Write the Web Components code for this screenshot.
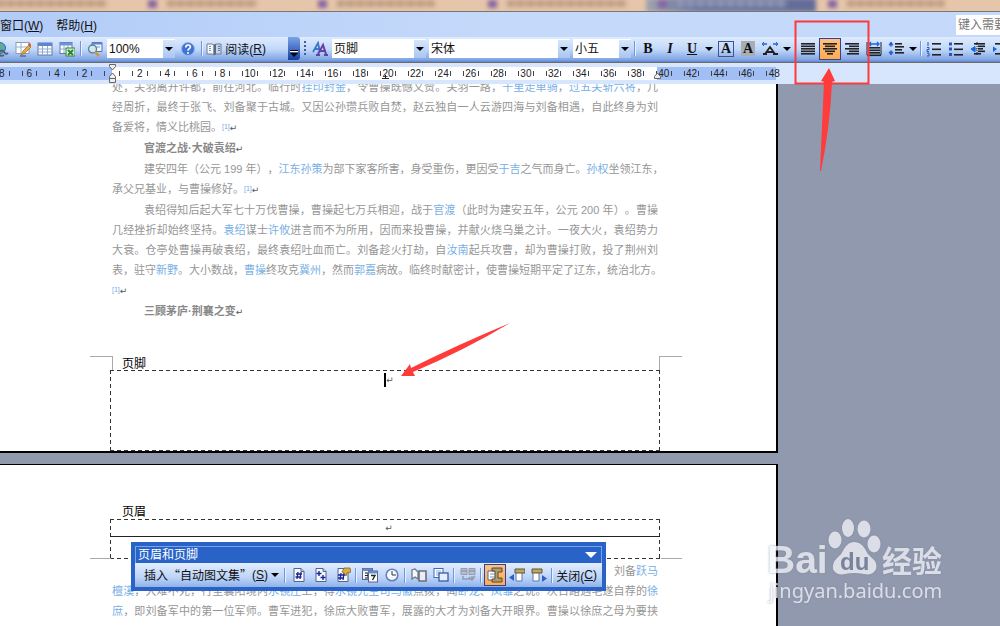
<!DOCTYPE html>
<html lang="zh-CN">
<head>
<meta charset="utf-8">
<title>Word</title>
<style>
	body {
		margin: 0;
		height: 100vh;
		overflow: hidden;
		font-family: "Liberation Sans", "Noto Sans CJK SC", sans-serif;
		font-size: 12px;
	}
</style>
</head>
<body>
<word-app></word-app>
<script>
// icon drawings, all on a 16x16 grid
const lines = (rows, color = '#222') => rows.map(([x, y, w]) => `<rect x="${x}" y="${y}" width="${w}" height="1.6" fill="${color}"/>`).join('');
const pageShape = '<path d="M3 1.500h7l3 3v10H3z" fill="#f4f8ff" stroke="#52658c"/><path d="M10 1.500v3h3" fill="#c5d4ee" stroke="#52658c"/>';
const ICONS = {
	globe: '<circle cx="7" cy="7" r="5.500" fill="#5aa2d8" stroke="#2c6f9b"/><path d="M3 5q4-4 6 0t-4 4z" fill="#62b36a"/><path d="M6 11q3-3 5 0t4 1M5 13q3 3 6 1" fill="none" stroke="#50606e" stroke-width="2"/>',
	draw: '<rect x="1" y="1.500" width="13" height="11" fill="#fff" stroke="#8c9bb8"/><path d="M1 6h13M6 2v10" stroke="#9aacc8"/><path d="M6 14l2-4 6-6 2 2-6 6z" fill="#f0a93c" stroke="#99642a" stroke-width=".7"/><path d="M13 3l2-1 1 2-1 2z" fill="#cf4a36"/><path d="M5 15h6" stroke="#445"/>',
	table: '<rect x="1" y="2" width="14" height="12" fill="#fff" stroke="#6079a8"/><rect x="1" y="2" width="14" height="3" fill="#5c86d0"/><path d="M1 8h14M1 11h14M5.500 5v9M10.500 5v9" stroke="#91a8cf"/>',
	excel: '<rect x="1" y="1.500" width="12" height="11" fill="#fff" stroke="#6079a8"/><rect x="1" y="1.500" width="12" height="3" fill="#6d94d4"/><path d="M1 8h12M5 4v8M9 4v8" stroke="#91a8cf"/><rect x="7" y="7" width="9" height="8" fill="#d7efcf" stroke="#31843b"/><path d="M9 9l5 5M14 9l-5 5" stroke="#27833a" stroke-width="1.800"/>',
	find: '<path d="M5 1.500h10v9H5z" fill="#eef5ff" stroke="#5372b1"/><path d="M5 1.500h10v2H5z" fill="#5c86d0"/><path d="M8 6h5" stroke="#7d9ad1"/><circle cx="5.500" cy="8" r="4" fill="#cbe9f5" stroke="#637c8c" stroke-width="1.300"/><path d="M8 11l4 4" stroke="#d4973c" stroke-width="2.500"/>',
	help: '<circle cx="8" cy="8" r="6.500" fill="#3f73d6" stroke="#9ab8eb"/><path d="M5.800 6.500q0-2.500 2.300-2.500t2.300 2q0 1-1.200 1.700T8 9.700" fill="none" stroke="#fff" stroke-width="1.600"/><circle cx="8" cy="12" r="1" fill="#fff"/>',
	book: '<path d="M1 3h5l2 1v10l-2-1H1z" fill="#f5f8fd" stroke="#6f7d94"/><path d="M15 3h-5L8 4v10l2-1h5z" fill="#c9d3e4" stroke="#6f7d94"/><path d="M8 4l2-1v10l-2 1z" fill="#596a86"/><path d="M3 5.500h2M3 7.500h2M3 9.500h2" stroke="#8090aa"/><path d="M12 5.500h2M12 7.500h2M12 9.500h2" stroke="#6c7c96"/>',
	styles: '<path d="M1 11L6 2l2 9M3 8h5" fill="none" stroke="#3e76cb" stroke-width="1.800"/><path d="M6 13L11 4l3 9M8 10h6M4 14h4M12 14h4" fill="none" stroke="#6540a4" stroke-width="2"/>',
	boxed: '<rect x="0.500" y="0.500" width="15" height="15" fill="none" stroke="#3c5590" stroke-width="1"/>',
	scale: '<path d="M3 13L8 6l5 7M5 11h6M1 13h4M11 13h5" fill="none" stroke="#222" stroke-width="1.800"/><path d="M0 3h5M11 3h5" stroke="#1c64db" stroke-width="1.500"/><path d="M2 1L0 3l2 2M14 1l2 2-2 2" fill="none" stroke="#1c64db"/>',
	justify: lines([[1, 2, 14], [1, 4.500, 14], [1, 7, 14], [1, 9.500, 14], [1, 12, 14]]),
	center: lines([[1, 2, 14], [3, 4.500, 10], [1, 7, 14], [3, 9.500, 10], [5, 12, 6]]),
	right: lines([[1, 2, 14], [5, 4.500, 10], [1, 7, 14], [5, 9.500, 10], [3, 12, 12]]),
	spread: '<path d="M1 1v13M15 1v13" stroke="#222"/>' + lines([[2, 6, 12], [2, 8.500, 12], [2, 11, 12], [1, 13.500, 14]]) + '<path d="M3 3h10M5 1L3 3l2 2M11 1l2 2-2 2" fill="none" stroke="#1c64db" stroke-width="1.300"/>',
	spacing: '<path d="M3 2v4M3 9v4M1 4l2-3 2 3zM1 11l2 3 2-3z" stroke="#1c64db" fill="#1c64db"/>' + lines([[7, 2, 7], [7, 5, 9], [7, 8, 7], [7, 11, 9]]),
	numbers: '<path d="M2 1v4M1 6.500h2v2H1v2h2M1 12h2v3H1" fill="none" stroke="#2856b5"/>' + lines([[6, 2, 9], [6, 7.500, 9], [6, 13, 9]]),
	bullets: '<path d="M1 1.500h3v3H1zM1 6.500h3v3H1zM1 12h3v3H1z" fill="#2856b5"/>' + lines([[6, 2, 9], [6, 7.500, 9], [6, 13, 9]]),
	outdent: '<path d="M5 5.500L1 8l4 3zM5 8h2" fill="#1c64db" stroke="#1c64db"/>' + lines([[4, 2, 11], [8, 4.500, 7], [8, 7, 5], [8, 9.500, 7], [4, 12, 7]]) + '<path d="M7 1v14" stroke="#222" stroke-dasharray="1 1"/>',
	indent: '<path d="M1 5.500L5 8l-4 3z" fill="#1c64db"/>' + lines([[3, 2, 12], [8, 4.500, 7], [8, 7, 7], [8, 9.500, 7], [3, 12, 12]]),
	pagenum: pageShape + '<path d="M7 5l-1 7M10 5l-1 7M5 7h6M4.500 10h6" stroke="#1d2399" stroke-width="1.300"/>',
	pages: pageShape + '<path d="M6 4v5M3.500 6.500h5M10 8v5M7.500 10.500h5" stroke="#1d2399" stroke-width="1.400"/>',
	format: pageShape + '<path d="M6 6l-1 7M9 6l-1 7M3 8h7M3 11h6" stroke="#1d2399" stroke-width="1.300"/><path d="M7 5l2-4h6l1 4-4 1-1 3-2-3z" fill="#d9ad3b" stroke="#765d22" stroke-width=".7"/>',
	date: '<rect x="0.500" y="1.500" width="10" height="11" fill="#f1f6ff" stroke="#52658c"/><rect x="0.500" y="1.500" width="10" height="2.500" fill="#688bcb"/><path d="M3 6h3v5H3M3 8.500h3" fill="none" stroke="#222"/><rect x="6.500" y="4" width="9" height="11" fill="#fff" stroke="#52658c"/><rect x="6.500" y="4" width="9" height="2.500" fill="#688bcb"/><path d="M9 8.500h4L10.500 13" fill="none" stroke="#222" stroke-width="1.400"/>',
	clock: '<circle cx="8" cy="8" r="5.800" fill="#f6faff" stroke="#6580b8" stroke-width="1.600"/><path d="M8 4v4h4" fill="none" stroke="#334"/>',
	setup: '<path d="M1 12V3l3-1 3 3v7l-3-2z" fill="#f6f8fb" stroke="#6f7885" stroke-width="1.300"/><path d="M8 4h7v10H8z" fill="#e9edf4" stroke="#6b6f78" stroke-width="1.600"/>',
	showdoc: '<rect x="1" y="1.500" width="9" height="9" fill="#fff" stroke="#3e67b6"/><path d="M3 4h5M3 6h5M3 8h5" stroke="#8ea9db"/><rect x="6" y="6" width="9" height="8" fill="#e4efff" stroke="#315cac" stroke-width="1.300"/>',
	same: '<path d="M1 1.500h6v6H1zM9 1.500h6v6H9z" fill="#b9bfcd" stroke="#929baf"/><path d="M1 4h6M9 4h6M3 9v3h9V9M9 10l3 3 3-4" fill="none" stroke="#929baf" stroke-width="1.500"/>',
	toggle: '<path d="M1 4h9v9H1z" fill="#fff" stroke="#4a68a0"/><path d="M3 7h5M3 10h5" stroke="#7694c9"/><path d="M5 1h10v4h-4v6h4v4H5v-3h3V4H5z" fill="#b39b62" stroke="#554c38"/>',
	prev: '<path d="M7 3v11h6V5" fill="#fff" stroke="#6078a8"/><path d="M6 2h10v4H6z" fill="#bca566" stroke="#5f5438"/><path d="M5 7v7l-5-3.500z" fill="#315fca"/>',
	next: '<path d="M2 3v11h6V5" fill="#fff" stroke="#6078a8"/><path d="M1 2h10v4H1z" fill="#bca566" stroke="#5f5438"/><path d="M11 8v7l5-3.500z" fill="#315fca"/>'
};

// small helper, attaches an open root and fills it
function render(host, html) {
	host.attachShadow({mode: 'open'}).innerHTML = html;
}

// one button of a toolbar: icon attribute or slotted text
class ToolButton extends HTMLElement {
	connectedCallback() {
		const icon = this.getAttribute('icon');
		const svg = icon ? `<svg viewBox="0 0 16 16" aria-hidden="true">${ICONS[icon]}</svg>` : '';
		render(this, `
			<style>
				:host { display: block; flex: none; width: 22px; height: 22px; }
				:host([wide]) { width: auto; }
				:host([narrow]) { width: 12px; }
				button {
					display: flex;
					align-items: center;
					justify-content: center;
					box-sizing: border-box;
					position: relative;
					width: 100%;
					height: 100%;
					padding: 0;
					border: 1px solid transparent;
					background: none;
					color: #111;
					font: inherit;
					white-space: nowrap;
				}
				:host([pressed]) button { border-color: #35408f; background: linear-gradient(#ffc184, #ffab4e); }
				svg { width: 16px; height: 16px; flex: none; }
				.caret { border: 4px solid transparent; border-top-color: #000; border-bottom: 0; }
			</style>
			<button type="button" aria-label="${this.getAttribute('label') || ''}">
				${svg}${this.hasAttribute('narrow') ? '<span class="caret"></span>' : ''}
				<slot></slot>
			</button>
		`);
		if (!this.hasAttribute('label')) this.shadowRoot.querySelector('button').removeAttribute('aria-label');
	}
}

// drop-down with a single visible value
class ComboBox extends HTMLElement {
	connectedCallback() {
		render(this, `
			<style>
				:host { display: block; position: relative; flex: none; height: 19px; background: #fff; }
				select {
					appearance: none;
					display: block;
					width: 100%;
					height: 100%;
					padding: 0 14px 0 2px;
					border: 0;
					background: none;
					color: #111;
					font: inherit;
				}
				span {
					position: absolute;
					inset: 1px 0 0 auto;
					width: 12px;
					display: grid;
					place-items: center;
					background: linear-gradient(#d6e5fc, #a9c6f3);
					pointer-events: none;
				}
				span::after { content: ""; border: 4px solid transparent; border-top-color: #000; border-bottom: 0; }
			</style>
			<select aria-label="${this.getAttribute('label')}"><option>${this.getAttribute('value')}</option></select>
			<span></span>
		`);
	}
}

// vertical divider between tool groups
class ToolSeparator extends HTMLElement {
	connectedCallback() {
		render(this, `
			<style>
				:host { display: block; flex: none; width: 1px; height: 15px; margin: 0 2px; background: #7397d3; border-right: 1px solid #e9f1ff; box-sizing: content-box; }
			</style>
		`);
	}
}

// out of focus browser tabs behind the window
class TabStrip extends HTMLElement {
	connectedCallback() {
		const widths = [110, 90, 98, 120, 110, 98];
		render(this, `
			<style>
				:host { display: block; height: 11px; background: #e6c6aa; overflow: hidden; border-bottom: 1px solid #777; }
				.row { display: flex; height: 14px; margin: -2px 0 0 -34px; filter: blur(2px); }
				.tab { display: flex; align-items: start; flex: none; width: 158px; gap: 10px; padding: 2px 0 0 12px; height: 12px; }
				.tab.on { background: linear-gradient(90deg, #a0a3ad, #64719f 30%, #626c99); }
				i { width: 9px; height: 8px; background: #8565a2; }
				b { height: 7px; background: repeating-linear-gradient(90deg, #bd9d84 0 7px, #cfae93 7px 10px); }
				.on b { background: repeating-linear-gradient(90deg, #8f97b4 0 7px, #7781a4 7px 10px); }
			</style>
			<div class="row">${widths.map((w, i) => `<div class="tab${i === 4 ? ' on' : ''}"><i></i><b style="width:${w}px"></b></div>`).join('')}</div>
		`);
	}
}

// menu row with the help box on its right
class MenuBar extends HTMLElement {
	connectedCallback() {
		render(this, `
			<style>
				:host { display: flex; align-items: center; height: 25px; overflow: hidden; background: linear-gradient(90deg, #b1ccf8, #c5d9fa 50%); }
				button { flex: none; padding: 0; margin-right: 13px; border: 0; background: none; font: inherit; color: #111; }
				input { flex: none; box-sizing: border-box; width: 140px; height: 20px; margin: 0 -96px 0 auto; padding: 0 2px; border: 0; background: #fff; font: inherit; }
				input::placeholder { color: #777; }
			</style>
			<button type="button">窗口(<u>W</u>)</button>
			<button type="button">帮助(<u>H</u>)</button>
			<input type="text" placeholder="键入需要帮助的问题" aria-label="帮助">
		`);
	}
}

// standard and formatting toolbars, side by side
class MainToolbar extends HTMLElement {
	connectedCallback() {
		render(this, `
			<style>
				:host { display: flex; height: 25px; overflow: hidden; background: #c5d9fa; border-bottom: 1px solid #6c6c6c; }
				.bar { display: flex; align-items: center; box-sizing: border-box; padding-bottom: 2px; background: linear-gradient(#dfebfe, #c0d7f9 50%, #7fa4e3 92%, #5b82cc); }
				.standard { flex: none; width: 300px; }
				.standard tool-button:first-child { margin-left: -10px; }
				.format { flex: 1; min-width: 0; }
				.format tool-separator { margin: 0 1px; }
				.more {
					display: flex;
					flex-direction: column;
					align-items: center;
					justify-content: end;
					gap: 2px;
					width: 12px;
					height: 23px;
					margin-left: auto;
					background: linear-gradient(#7ba2e8, #163f9f);
					border-radius: 0 3px 3px 0;
					border: 0;
					padding: 0 0 3px;
				}
				.more::before { content: ""; width: 8px; height: 1px; background: #000; box-shadow: 0 1px #fff; }
				.more::after { content: ""; border: 4px solid transparent; border-top-color: #000; border-bottom: 0; }
				.grip { flex: none; width: 2px; height: 15px; margin: 0 3px 0 4px; background: repeating-linear-gradient(#3b5c9e 0 2px, transparent 2px 4px); }
				.zoom { width: 68px; margin: 0 2px 0 1px; }
				.style { width: 94px; margin: 0 3px 0 1px; }
				.font { width: 141px; margin-right: 3px; }
				.size { width: 58px; margin-right: 2px; }
				.letter { font: bold 14px "Liberation Serif", serif; }
				i.letter { font-style: italic; }
				.over { position: absolute; }
				.shade { padding: 0 2px; background: #a9adb5; line-height: 15px; }
				.space { flex: none; width: 4px; }
			</style>
			<div class="bar standard">
				<tool-button icon="globe" label="超链接"></tool-button>
				<tool-button icon="draw" label="表格和边框"></tool-button>
				<tool-button icon="table" label="插入表格"></tool-button>
				<tool-button icon="excel" label="插入工作表"></tool-button>
				<tool-separator></tool-separator>
				<tool-button icon="find" label="文档结构图"></tool-button>
				<combo-box class="zoom" label="显示比例" value="100%"></combo-box>
				<tool-button icon="help" label="帮助"></tool-button>
				<tool-separator></tool-separator>
				<tool-button wide icon="book">&nbsp;阅读(<u>R</u>)</tool-button>
				<button type="button" class="more" aria-label="工具栏选项"></button>
			</div>
			<div class="bar format">
				<span class="grip"></span>
				<tool-button icon="styles" label="格式窗格"></tool-button>
				<combo-box class="style" label="样式" value="页脚"></combo-box>
				<combo-box class="font" label="字体" value="宋体"></combo-box>
				<combo-box class="size" label="字号" value="小五"></combo-box>
				<tool-separator></tool-separator>
				<tool-button><b class="letter">B</b></tool-button>
				<tool-button><i class="letter">I</i></tool-button>
				<tool-button><u class="letter">U</u></tool-button>
				<tool-button narrow label="下划线"></tool-button>
				<tool-button icon="boxed"><b class="letter over">A</b></tool-button>
				<tool-button><b class="letter shade">A</b></tool-button>
				<tool-button icon="scale" label="字符缩放"></tool-button>
				<tool-button narrow label="缩放比例"></tool-button>
				<span class="space"></span>
				<tool-button icon="justify" label="两端对齐"></tool-button>
				<tool-button pressed icon="center" label="居中"></tool-button>
				<tool-button icon="right" label="右对齐"></tool-button>
				<tool-button icon="spread" label="分散对齐"></tool-button>
				<tool-button icon="spacing" label="行距"></tool-button>
				<tool-button narrow label="行距选项"></tool-button>
				<tool-separator></tool-separator>
				<tool-button icon="numbers" label="编号"></tool-button>
				<tool-button icon="bullets" label="项目符号"></tool-button>
				<tool-button icon="outdent" label="减少缩进量"></tool-button>
				<tool-button icon="indent" label="增加缩进量"></tool-button>
			</div>
		`);
	}
}

// horizontal ruler, counted in characters from the left margin
class DocRuler extends HTMLElement {
	connectedCallback() {
		let cells = '';
		for (let n = -8; n <= 48; n += 2) {
			cells += `<span>${n ? Math.abs(n) : ''}</span>`;
		}
		render(this, `
			<style>
				:host { display: block; overflow: hidden; padding: 4px 0; background: #d8e6fd; }
				.track {
					position: relative;
					width: var(--paper);
					height: 13px;
					background: linear-gradient(90deg, #a2bff5 112px, #fff 112px 657px, #a2bff5 657px);
				}
				.cells { display: grid; grid-template-columns: repeat(29, 1fr); width: 800px; margin-left: -12px; }
				.cells span { display: flex; align-items: center; justify-content: space-between; padding: 0 6px; height: 13px; font-size: 10px; color: #222; }
				.cells span::before, .cells span::after { content: ""; width: 1px; height: 5px; background: #444; }
				.cells span:last-child::after { background: none; }
				svg { position: absolute; top: -4px; }
				.left { left: 107px; }
				.tab { left: 380px; }
				.right { left: 652px; }
			</style>
			<div class="track">
				<div class="cells">${cells}</div>
				<svg class="left" width="11" height="21"><path d="M2.500 1.500h6v2L5.500 7l-3-3.500zM5.500 10l3 3.500v2h-6v-2zM2.500 15.500h6v4h-6z" fill="#eee" stroke="#666"/></svg>
				<svg class="tab" width="11" height="21"><path d="M2 15.500h7M5.500 12v4" stroke="#222" fill="none"/></svg>
				<svg class="right" width="11" height="21"><path d="M5.500 10l3 3.500v2h-6v-2z" fill="#eee" stroke="#666"/></svg>
			</div>
		`);
	}
}

// body text of a page
class DocText extends HTMLElement {
	connectedCallback() {
		render(this, `
			<style>
				:host { display: block; width: 546px; margin-left: 112px; color: #969696; font-size: 11px; line-height: 20px; text-spacing-trim: space-all; }
				::slotted(p) { margin: 0 0 1px; white-space: nowrap; }
				::slotted(p.full) { margin: 0; text-align: justify; text-align-last: justify; }
				::slotted(p.first) { text-indent: 32px; }
				::slotted(p.title) { text-indent: 32px; font-weight: 600; color: #888; }
				::slotted(p.tail) { text-align: right; margin: 0; }
			</style>
			<slot></slot>
		`);
	}
}

// sheets with header and footer areas
class DocDesk extends HTMLElement {
	connectedCallback() {
		const mark = '<span class="mark">↵</span>';
		const ref = '<sup>[1]</sup>';
		render(this, `
			<style>
				:host { display: block; flex: 1; min-height: 0; overflow: hidden; background: #9199ae; }
				.sheet { position: relative; width: var(--paper); background: #fff; border: solid #000; border-width: 0 2px 2px 0; margin-bottom: 11px; }
				.sheet.second { border-width: 1px 2px 0 0; margin: 0; height: 200px; }
				doc-text.top { position: relative; top: -7px; margin-bottom: -7px; }
				a { color: #78b0e6; text-decoration: none; }
				sup { color: #78a6ec; font-size: 7px; line-height: 1; vertical-align: 2px; }
				.mark { color: #555; font: 9px "DejaVu Sans", sans-serif; line-height: 1; }
				.corners { display: flex; justify-content: space-between; width: 592px; margin: 35px 0 0 90px; height: 14px; }
				.corners i { width: 22px; border-top: 1px solid #aaa; }
				.corners i:first-child { border-right: 1px solid #aaa; }
				.corners i:last-child { border-left: 1px solid #aaa; }
				.corners b { flex: 1; margin-left: 9px; font-weight: 400; line-height: 16px; }
				.area { --ink: #333; box-sizing: border-box; width: 550px; margin-left: 110px; text-align: center; background:
					repeating-linear-gradient(90deg, var(--ink) 0 4px, transparent 4px 7px) 0 0 / 100% 1px no-repeat,
					repeating-linear-gradient(90deg, var(--ink) 0 4px, transparent 4px 7px) 0 100% / 100% 1px no-repeat,
					repeating-linear-gradient(var(--ink) 0 4px, transparent 4px 7px) 0 0 / 1px 100% no-repeat,
					repeating-linear-gradient(var(--ink) 0 4px, transparent 4px 7px) 100% 0 / 1px 100% no-repeat; }
				.footer { height: 81px; padding: 2px 0 0 8px; }
				.cursor { display: inline-block; width: 2px; height: 14px; background: #000; vertical-align: middle; }
				.label { padding: 40px 0 0 122px; line-height: 14px; }
				.header { height: 40px; }
				.line { height: 17px; padding-left: 8px; line-height: 17px; border-bottom: 1px solid #222; }
				.ends { display: flex; justify-content: space-between; width: 592px; margin-left: 90px; height: 3px; margin-top: -1px; }
				.ends i { width: 21px; height: 1px; background: #aaa; }
			</style>
			<section class="sheet">
				<doc-text class="top">
					<p class="full">处，关羽离开许都，前往河北。临行时<a href="#">挂印封金</a>，令曹操既憾又赞。关羽一路，<a href="#">千里走单骑</a>，<a href="#">过五关斩六将</a>，几<br>经周折，最终于张飞、刘备聚于古城。又因公孙瓒兵败自焚，赵云独自一人云游四海与刘备相遇，自此终身为刘</p>
					<p>备爱将，情义比桃园。${ref}${mark}</p>
					<p class="title">官渡之战·大破袁绍${mark}</p>
					<p class="full first">建安四年（公元 199 年），<a href="#">江东孙策</a>为部下家客所害，身受重伤，更因受<a href="#">于吉</a>之气而身亡。<a href="#">孙权</a>坐领江东，</p>
					<p>承父兄基业，与曹操修好。${ref}${mark}</p>
					<p class="full first">袁绍得知后起大军七十万伐曹操，曹操起七万兵相迎，战于<a href="#">官渡</a>（此时为建安五年，公元 200 年）。曹操</p>
					<p class="full">几经挫折却始终坚持。<a href="#">袁绍</a>谋士<a href="#">许攸</a>进言而不为所用，因而来投曹操，并献火烧乌巢之计。一夜大火，袁绍势力<br>大衰。仓亭处曹操再破袁绍，最终袁绍吐血而亡。刘备趁火打劫，自<a href="#">汝南</a>起兵攻曹，却为曹操打败，投了荆州刘<br>表，驻守<a href="#">新野</a>。大小数战，<a href="#">曹操</a>终攻克<a href="#">冀州</a>，然而<a href="#">郭嘉</a>病故。临终时献密计，使曹操短期平定了辽东，统治北方。</p>
					<p>${ref}${mark}</p>
					<p class="title">三顾茅庐·荆襄之变${mark}</p>
				</doc-text>
				<div class="corners"><i></i><b>页脚</b><i></i></div>
				<div class="area footer"><span class="cursor"></span>${mark}</div>
			</section>
			<section class="sheet second">
				<div class="label">页眉</div>
				<div class="area header"><div class="line">${mark}</div></div>
				<div class="ends"><i></i><i></i></div>
				<doc-text>
					<p class="tail">刘备<a href="#">跃马</a></p>
					<p class="full"><a href="#">檀溪</a>，大难不死，行至襄阳境内<a href="#">水镜庄</a>上，得<a href="#">水镜先生司马徽</a>点拨，闻<a href="#">卧龙</a>、<a href="#">凤雏</a>之说。次日路遇毛遂自荐的<a href="#">徐</a><br><a href="#">庶</a>，即刘备军中的第一位军师。曹军进犯，徐庶大败曹军，展露的大才为刘备大开眼界。曹操以徐庶之母为要挟</p>
				</doc-text>
			</section>
		`);
	}
}

// floating header and footer toolbar
class FloatingBar extends HTMLElement {
	connectedCallback() {
		render(this, `
			<style>
				:host { display: block; box-sizing: border-box; border: 4px solid #2a63c8; background: #2a63c8; }
				.title { display: flex; align-items: center; justify-content: space-between; height: 16px; padding: 0 4px 0 2px; border: 1px solid #7ba4e8; border-width: 1px 1px 0; color: #fff; line-height: 14px; }
				.title button { padding: 0; border: 6px solid transparent; border-top-color: #fff; border-bottom: 0; background: none; width: 0; height: 0; }
				.tools { display: flex; align-items: center; height: 24px; padding: 0 4px 0 8px; background: linear-gradient(#e2edfe, #bdd4f8 60%, #8fb2ea); }
				.tools tool-separator { margin: 0 2px 0 1px; }
				.cjk { font-family: "Noto Sans CJK SC", sans-serif; line-height: 16px; }
				.gap { flex: 1; }
			</style>
			<div class="title"><span>页眉和页脚</span><button type="button" aria-label="选项"></button></div>
			<div class="tools">
				<tool-button wide><span class="cjk">插入“自动图文集”</span>(<u>S</u>)</tool-button>
				<tool-button narrow label="自动图文集"></tool-button>
				<span class="gap"></span>
				<tool-separator></tool-separator>
				<tool-button icon="pagenum" label="插入页码"></tool-button>
				<tool-button icon="pages" label="插入页数"></tool-button>
				<tool-button icon="format" label="页码格式"></tool-button>
				<tool-separator></tool-separator>
				<tool-button icon="date" label="插入日期"></tool-button>
				<tool-button icon="clock" label="插入时间"></tool-button>
				<tool-separator></tool-separator>
				<tool-button icon="setup" label="页面设置"></tool-button>
				<tool-button icon="showdoc" label="显示文档文字"></tool-button>
				<tool-separator></tool-separator>
				<tool-button icon="same" label="链接到前一个"></tool-button>
				<tool-separator></tool-separator>
				<tool-button pressed icon="toggle" label="切换页眉页脚"></tool-button>
				<tool-button icon="prev" label="前一项"></tool-button>
				<tool-button icon="next" label="后一项"></tool-button>
				<tool-separator></tool-separator>
				<tool-button wide>关闭(<u>C</u>)</tool-button>
			</div>
		`);
	}
}

// site mark in the lower right corner
class BaiduMark extends HTMLElement {
	connectedCallback() {
		render(this, `
			<style>
				:host { display: block; width: 180px; pointer-events: none; opacity: .75; }
				svg { display: block; width: 180px; height: 92px; overflow: visible; filter: drop-shadow(0 0 1px #8088a0); }
				text { font-family: "Liberation Sans", "Noto Sans CJK SC", sans-serif; fill: #f4f6fa; }
				.du { fill: #737c96; }
				.url { font-family: "Noto Sans", sans-serif; }
			</style>
			<svg viewBox="0 0 180 92">
				<text x="0" y="55" font-size="39" font-weight="bold">Bai</text>
				<g fill="#f4f6fa">
					<ellipse cx="68" cy="22" rx="6.500" ry="8.500"/>
					<ellipse cx="81" cy="10" rx="6" ry="9"/>
					<ellipse cx="97" cy="11" rx="6.500" ry="8.500"/>
					<ellipse cx="107" cy="26" rx="6.500" ry="8.500"/>
					<path d="M87 24q7 0 11 7 2 5 7 9 6 5 4 11-3 7-12 5-10-2-19 0-9 2-12-5-1-6 4-11 5-4 7-9 4-7 10-7z"/>
				</g>
				<text class="du" x="73" y="52" font-size="24" font-weight="bold">du</text>
				<text x="115" y="54" font-size="30" font-weight="bold">经验</text>
				<text class="url" x="2" y="80" font-size="20">jingyan.baidu.com</text>
			</svg>
		`);
	}
}

// whole window
class WordApp extends HTMLElement {
	constructor() {
		super();
		render(this, `
			<style>
				:host { --paper: 776px; display: flex; flex-direction: column; position: relative; height: 100%; overflow: hidden; }
				floating-bar { position: absolute; left: 131px; top: 542px; width: 475px; }
				baidu-mark { position: absolute; left: 767px; top: 518px; }
				.notes { position: absolute; left: 0; top: 0; pointer-events: none; }
			</style>
			<tab-strip></tab-strip>
			<menu-bar></menu-bar>
			<main-toolbar></main-toolbar>
			<doc-ruler></doc-ruler>
			<doc-desk></doc-desk>
			<floating-bar></floating-bar>
			<baidu-mark></baidu-mark>
			<svg class="notes" width="880" height="400" aria-hidden="true">
				<rect x="795.500" y="21.500" width="73" height="62" fill="none" stroke="#f93b3b" stroke-width="2"/>
				<path d="M829 68l6 13-3 1q-2 45-11 89h-1l4-89-3-1z" fill="#ff3b3b"/>
				<path d="M401 376l9-12 1 4q46-23 99-45-45 27-97 49l2 4z" fill="#ff3b3b"/>
			</svg>
		`);
	}
}

// register custom elements
customElements.define('tool-button', ToolButton);
customElements.define('combo-box', ComboBox);
customElements.define('tool-separator', ToolSeparator);
customElements.define('tab-strip', TabStrip);
customElements.define('menu-bar', MenuBar);
customElements.define('main-toolbar', MainToolbar);
customElements.define('doc-ruler', DocRuler);
customElements.define('doc-text', DocText);
customElements.define('doc-desk', DocDesk);
customElements.define('floating-bar', FloatingBar);
customElements.define('baidu-mark', BaiduMark);
customElements.define('word-app', WordApp);
</script>
</body>
</html>
